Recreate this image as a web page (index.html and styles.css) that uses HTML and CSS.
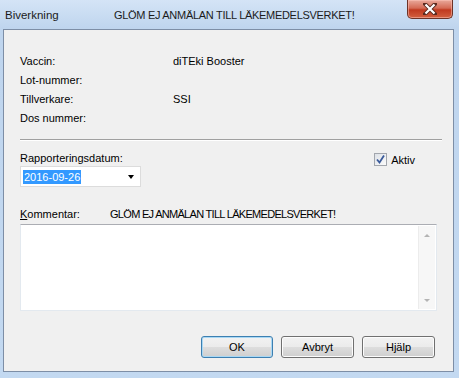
FILE: index.html
```html
<!DOCTYPE html>
<html lang="sv">
<head>
  <meta charset="UTF-8">
  <title>Biverkning</title>
  <link rel="stylesheet" href="styles.css">
</head>
<body>
  <div class="window">
    <!-- titelrad -->
    <div class="titlebar">
      <span class="app-name">Biverkning</span>
      <span class="caption">GLÖM EJ ANMÄLAN TILL LÄKEMEDELSVERKET!</span>
      <span class="close">
        <svg width="14" height="12" viewBox="0 0 14 12">
          <path d="M2 1 L12 11 M12 1 L2 11" stroke="#5a2a20" stroke-width="4" stroke-linecap="square"/>
          <path d="M2.5 1.5 L11.5 10.5 M11.5 1.5 L2.5 10.5" stroke="#fff" stroke-width="2.2"/>
        </svg>
      </span>
    </div>
    <!-- klientyta -->
    <div class="client">
      <div class="info">
        <span>Vaccin:</span><span>diTEki Booster</span>
        <span>Lot-nummer:</span><span></span>
        <span>Tillverkare:</span><span>SSI</span>
        <span>Dos nummer:</span><span></span>
      </div>
      <div class="sep"></div>
      <div class="report">
        <div class="date-field">
          <div class="lbl">Rapporteringsdatum:</div>
          <div class="combo">
            <span class="selected">2016-09-26</span>
            <span class="drop"></span>
          </div>
        </div>
        <label class="check">
          <span class="box">
            <svg width="11" height="11" viewBox="0 0 11 11">
              <path d="M2 5.5 L4.5 8.5 L9 1.5" fill="none" stroke="#3a5a9a" stroke-width="1.8"/>
            </svg>
          </span>
          Aktiv
        </label>
      </div>
      <div class="comment-head">
        <span class="lbl"><u>K</u>ommentar:</span>
        <span class="caps">GLÖM EJ ANMÄLAN TILL LÄKEMEDELSVERKET!</span>
      </div>
      <div class="memo">
        <div class="scrollbar">
          <span class="arrow up"></span>
          <span class="arrow down"></span>
        </div>
      </div>
      <div class="buttons">
        <button class="btn default">OK</button>
        <button class="btn">Avbryt</button>
        <button class="btn">Hjälp</button>
      </div>
    </div>
  </div>
</body>
</html>
```

FILE: styles.css
```css
/* grund */
* {
  margin: 0;
  padding: 0;
  box-sizing: border-box;
}
body {
  font-family: "Liberation Sans", Arial, sans-serif;
  font-size: 11px;
  color: #000;
  background: #c4d9f1;
}
/* fönster */
.window {
  display: flex;
  flex-direction: column;
  width: 459px;
  height: 378px;
  background: linear-gradient(#d4e4f6 0, #bfd5ee 28px, #c3d9f1 100%);
}
.titlebar {
  display: flex;
  align-items: center;
  height: 29px;
  padding-left: 5px;
  color: #1b1b1b;
}
.app-name {
  width: 109px;
  font-size: 11.5px;
}
.caption {
  font-size: 11px;
  letter-spacing: -0.3px;
}
.close {
  display: flex;
  align-items: center;
  justify-content: center;
  align-self: flex-start;
  width: 46px;
  height: 19px;
  margin-left: auto;
  margin-right: 6px;
  border: 1px solid #6d3327;
  border-top: none;
  border-radius: 0 0 5px 5px;
  background: linear-gradient(#e9a99b 0, #d46a55 45%, #c0391f 55%, #d2603f 100%);
  box-shadow: inset 0 0 0 1px rgba(255, 200, 190, 0.5);
}
/* klientyta */
.client {
  flex: 1;
  margin: 0 5px 6px 3px;
  padding: 22px 11px 0 16px;
  border: 1px solid #7d8ea6;
  background: #f0f0f0;
}
.info {
  display: grid;
  grid-template-columns: 153px auto;
  grid-auto-rows: 19px;
  line-height: 19px;
}
.sep {
  margin-top: 11px;
  border-top: 1px solid #a0a0a0;
  border-bottom: 1px solid #fff;
}
.report {
  display: flex;
  justify-content: space-between;
  margin-top: 11px;
}
.lbl {
  line-height: 13px;
}
.combo {
  display: flex;
  align-items: center;
  width: 121px;
  height: 21px;
  margin-top: 1px;
  padding: 0 6px 0 2px;
  border: 1px solid #dcdcdc;
  background: #fff;
}
.selected {
  padding: 0 1px;
  line-height: 14px;
  color: #fff;
  background: #3399ff;
}
.drop {
  margin-left: auto;
  border-left: 3.5px solid transparent;
  border-right: 3.5px solid transparent;
  border-top: 4px solid #000;
}
.check {
  display: flex;
  align-items: center;
  gap: 4px;
  height: 13px;
  margin-top: 1px;
  margin-right: 27px;
}
.box {
  display: flex;
  align-items: center;
  justify-content: center;
  width: 13px;
  height: 13px;
  border: 1px solid #a2a6ad;
  background: linear-gradient(135deg, #dde1e7, #fbfbfb);
}
.comment-head {
  display: flex;
  margin-top: 21px;
  line-height: 13px;
}
.comment-head .lbl {
  width: 90px;
}
.caps {
  letter-spacing: -0.7px;
}
.memo {
  display: flex;
  justify-content: flex-end;
  width: 417px;
  height: 87px;
  margin-top: 3px;
  padding: 1px;
  border: 1px solid #e3e9ef;
  border-top-color: #abadb3;
  background: #fff;
}
.scrollbar {
  display: flex;
  flex-direction: column;
  justify-content: space-between;
  align-items: center;
  width: 17px;
  padding: 8px 0 7px;
  background: #f7f7f7;
  border-left: 1px solid #ececec;
}
.arrow {
  border-left: 3.5px solid transparent;
  border-right: 3.5px solid transparent;
}
.arrow.up {
  border-bottom: 3px solid #b4b4b4;
}
.arrow.down {
  border-top: 3px solid #b4b4b4;
}
/* knappar */
.buttons {
  display: flex;
  justify-content: flex-end;
  gap: 8px;
  margin-top: 25px;
  padding-right: 7px;
}
.btn {
  width: 73px;
  height: 22px;
  font-family: inherit;
  font-size: 11px;
  color: #000;
  border: 1px solid #707070;
  border-radius: 3px;
  background: linear-gradient(#f2f2f2 0, #ebebeb 50%, #dddddd 51%, #cfcfcf 100%);
  box-shadow: inset 0 0 0 1px #fcfcfc;
}
.btn.default {
  width: 72px;
  border-color: #3c7fb1;
  box-shadow: inset 0 0 0 1px #a9d8f4;
}
```
